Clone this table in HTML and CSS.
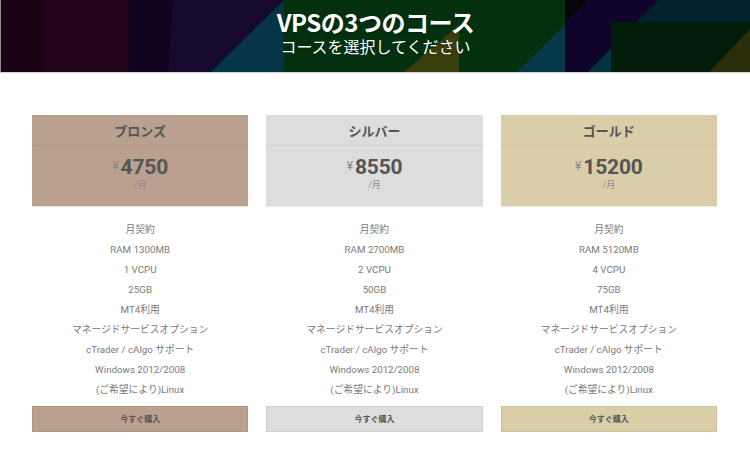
FILE: index.html
```html
<!DOCTYPE html>
<html lang="ja">
<head>
<meta charset="utf-8">
<title>VPSの3つのコース</title>
<link rel="stylesheet" href="styles.css">
</head>
<body>
<header class="hero">
  <svg class="hero-bg" viewBox="0 0 750 72" preserveAspectRatio="none" aria-hidden="true">
    <rect width="750" height="72" fill="#03310f"/>
    <rect x="0" y="0" width="128" height="72" fill="#21031a"/>
    <rect x="0" y="0" width="42" height="72" fill="#1a0213"/>
    <polygon points="128,0 283,0 210,72 128,72" fill="#10031f"/>
    <polygon points="172,0 283,0 210,72 167,72" fill="#150a2e"/>
    <polygon points="283,0 283,72 210,72" fill="#053347"/>
    <polygon points="403,72 458,25 458,72" fill="#3a3e0c"/>
    <polygon points="516,72 564,25 564,72" fill="#063849"/>
    <rect x="564" y="0" width="186" height="72" fill="#02202d"/>
    <polygon points="564,0 588,0 564,22" fill="#060606"/>
    <polygon points="588,0 657,0 587,72 564,72 564,22" fill="#10042a"/>
    <rect x="610" y="22" width="140" height="50" fill="#031c09"/>
    <polygon points="587,72 610,49 610,72" fill="#053040"/>
    <polygon points="708,72 750,28 750,72" fill="#2b2c08"/>
  </svg>
  <h1 class="hero-title">VPSの3つのコース</h1>
  <p class="hero-sub">コースを選択してください</p>
</header>

<main class="plans">
  <section class="plan plan-bronze">
    <div class="plan-head">
      <h2 class="plan-name">ブロンズ</h2>
      <div class="plan-price-box">
        <div class="plan-price"><span class="yen">¥</span><span class="amount">4750</span></div>
        <div class="plan-period">/月</div>
      </div>
    </div>
    <ul class="plan-features">
      <li>月契約</li>
      <li>RAM 1300MB</li>
      <li>1 VCPU</li>
      <li>25GB</li>
      <li>MT4利用</li>
      <li>マネージドサービスオプション</li>
      <li>cTrader / cAlgo サポート</li>
      <li>Windows 2012/2008</li>
      <li>(ご希望により)Linux</li>
    </ul>
    <a class="plan-btn" href="#">今すぐ購入</a>
  </section>

  <section class="plan plan-silver">
    <div class="plan-head">
      <h2 class="plan-name">シルバー</h2>
      <div class="plan-price-box">
        <div class="plan-price"><span class="yen">¥</span><span class="amount">8550</span></div>
        <div class="plan-period">/月</div>
      </div>
    </div>
    <ul class="plan-features">
      <li>月契約</li>
      <li>RAM 2700MB</li>
      <li>2 VCPU</li>
      <li>50GB</li>
      <li>MT4利用</li>
      <li>マネージドサービスオプション</li>
      <li>cTrader / cAlgo サポート</li>
      <li>Windows 2012/2008</li>
      <li>(ご希望により)Linux</li>
    </ul>
    <a class="plan-btn" href="#">今すぐ購入</a>
  </section>

  <section class="plan plan-gold">
    <div class="plan-head">
      <h2 class="plan-name">ゴールド</h2>
      <div class="plan-price-box">
        <div class="plan-price"><span class="yen">¥</span><span class="amount">15200</span></div>
        <div class="plan-period">/月</div>
      </div>
    </div>
    <ul class="plan-features">
      <li>月契約</li>
      <li>RAM 5120MB</li>
      <li>4 VCPU</li>
      <li>75GB</li>
      <li>MT4利用</li>
      <li>マネージドサービスオプション</li>
      <li>cTrader / cAlgo サポート</li>
      <li>Windows 2012/2008</li>
      <li>(ご希望により)Linux</li>
    </ul>
    <a class="plan-btn" href="#">今すぐ購入</a>
  </section>
</main>
</body>
</html>
```

FILE: styles.css
```css
* {
  box-sizing: border-box;
}

html, body {
  margin: 0;
  padding: 0;
  background: #ffffff;
}

body {
  font-family: Roboto, "Noto Sans CJK JP", sans-serif;
  color: #777777;
}

/* ---------- header ---------- */
.hero {
  position: relative;
  height: 73px;
  padding-top: 9px;
  border-left: 1px solid #8c8c8c;
  border-bottom: 1px solid #d4d4d4;
  overflow: hidden;
  text-align: center;
  color: #ffffff;
  font-family: "Noto Sans CJK JP", sans-serif;
}

.hero-bg {
  position: absolute;
  left: 0;
  top: 0;
  width: 750px;
  height: 72px;
  z-index: 0;
}

.hero-title,
.hero-sub {
  position: relative;
  z-index: 1;
  margin: 0;
  text-shadow: 0 1px 2px rgba(0, 0, 0, 0.35);
}

.hero-title {
  font-size: 24px;
  line-height: 26px;
  height: 26px;
  font-weight: 700;
  letter-spacing: -0.5px;
}

.hero-sub {
  margin-top: 1px;
  font-size: 16px;
  line-height: 20px;
  font-weight: 400;
}

/* ---------- plans ---------- */
.plans {
  display: grid;
  grid-template-columns: repeat(3, 1fr);
  column-gap: 18px;
  padding: 42px 33px 0 32px;
}

.plan {
  text-align: center;
}

.plan-head {
  box-shadow: 0 1px 1px rgba(0, 0, 0, 0.08);
}

.plan-name {
  margin: 0;
  height: 31px;
  line-height: 31px;
  font-family: "Noto Sans CJK JP", sans-serif;
  font-size: 13px;
  font-weight: 700;
  color: #555555;
  border-bottom: 1px dotted rgba(0, 0, 0, 0.06);
}

.plan-price-box {
  height: 60px;
  padding-top: 9px;
}

.plan-price {
  line-height: 24px;
  height: 24px;
}

.yen {
  font-size: 12px;
  line-height: 12px;
  color: #8a8a8a;
  vertical-align: 4px;
  margin-right: 2px;
}

.amount {
  font-size: 21px;
  font-weight: 700;
  color: #555555;
  letter-spacing: -0.2px;
}

.plan-period {
  font-family: Roboto, "Noto Sans CJK JP", sans-serif;
  font-size: 9px;
  line-height: 12px;
  color: #8a8a8a;
}

.plan-features {
  list-style: none;
  margin: 14px 0 0;
  padding: 0;
}

.plan-features li {
  font-size: 9.75px;
  line-height: 20px;
  height: 20px;
  color: #7a7a7a;
}

.plan-btn {
  display: block;
  margin-top: 6px;
  height: 26px;
  line-height: 24px;
  border: 1px solid rgba(0, 0, 0, 0.06);
  box-shadow: 0 1px 1px rgba(0, 0, 0, 0.08);
  font-family: "Noto Sans CJK JP", sans-serif;
  font-size: 8px;
  font-weight: 700;
  color: #555555;
  text-decoration: none;
}

/* ---------- colour variants ---------- */
.plan-bronze .plan-head,
.plan-bronze .plan-btn {
  background: #b9a08f;
}

.plan-silver .plan-head,
.plan-silver .plan-btn {
  background: #dddddd;
}

.plan-gold .plan-head,
.plan-gold .plan-btn {
  background: #dacea9;
}
```
